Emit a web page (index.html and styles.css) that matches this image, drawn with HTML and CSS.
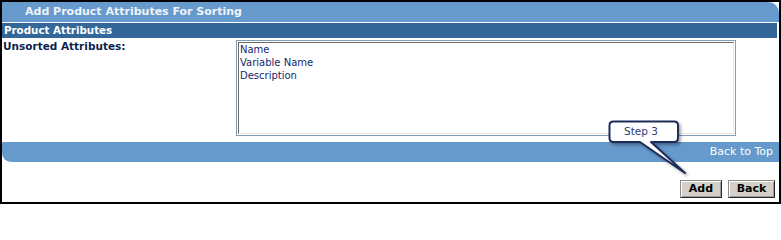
FILE: index.html
```html
<!DOCTYPE html>
<html lang="en">
<head>
<meta charset="utf-8">
<title>Add Product Attributes For Sorting</title>
<link rel="stylesheet" href="styles.css">
</head>
<body>
<div class="frame">
  <div class="title-bar">Add Product Attributes For Sorting</div>
  <div class="section-bar">Product Attributes</div>
  <div class="form-row">
    <div class="field-label">Unsorted Attributes:</div>
    <div class="listbox-wrap">
      <div class="listbox">
        <div class="option">Name</div>
        <div class="option">Variable Name</div>
        <div class="option">Description</div>
      </div>
    </div>
  </div>
  <div class="bottom-bar"><span class="top-link">Back to Top</span></div>
  <div class="actions">
    <button class="btn btn-add" type="button">Add</button>
    <button class="btn btn-back" type="button">Back</button>
  </div>
  <div class="callout">
    <svg class="callout-shape" width="781" height="204" viewBox="0 0 781 204" aria-hidden="true">
      <path d="M613.5 121.5 H674 Q678 121.5 678 125.5 V138 Q678 142 674 142 H651 L685 173 L640 142 H613.5 Q609.5 142 609.5 138 V125.5 Q609.5 121.5 613.5 121.5 Z" fill="#ffffff" stroke="#1e2c5c" stroke-width="2" stroke-linejoin="round"/>
    </svg>
    <span class="callout-text">Step 3</span>
  </div>
</div>
</body>
</html>
```
FILE: styles.css
```css
html, body {
  margin: 0;
  padding: 0;
  background: #ffffff;
}

.frame {
  position: relative;
  box-sizing: border-box;
  width: 781px;
  height: 204px;
  border: 2px solid #000000;
  background: #ffffff;
  font-family: "DejaVu Sans", Verdana, sans-serif;
  overflow: hidden;
}

.title-bar {
  height: 20px;
  line-height: 20px;
  margin-bottom: 1px;
  padding-left: 23px;
  background: #6699cc;
  border-top-right-radius: 11px;
  color: #eef3fa;
  font-size: 11px;
  font-weight: bold;
  white-space: nowrap;
}

.section-bar {
  height: 15px;
  line-height: 15px;
  margin-right: 2px;
  padding-left: 2px;
  background: #336699;
  color: #ffffff;
  font-size: 10.3px;
  font-weight: bold;
  white-space: nowrap;
}

.form-row {
  display: grid;
  grid-template-columns: 234px 500px;
  align-items: start;
}

.field-label {
  padding-top: 2px;
  padding-left: 1px;
  line-height: 13px;
  font-size: 10.5px;
  font-weight: bold;
  color: #0d1f4f;
  white-space: nowrap;
}

.listbox-wrap {
  box-sizing: border-box;
  margin-top: 2px;
  height: 96px;
  padding: 1px;
  border: 1px solid #7f9db9;
}

.listbox {
  box-sizing: border-box;
  height: 100%;
  padding: 0 1px;
  border: 1px solid;
  border-color: #6e6c60 #ebe8d8 #ebe8d8 #6e6c60;
  background: #ffffff;
}

.option {
  line-height: 13px;
  font-size: 10px;
  color: #14286e;
  white-space: nowrap;
}

.bottom-bar {
  display: flex;
  justify-content: flex-end;
  align-items: center;
  margin-top: 6px;
  height: 20px;
  padding-right: 6px;
  background: #6699cc;
  border-bottom-left-radius: 9px;
}

.top-link {
  color: #ffffff;
  font-size: 11px;
  line-height: 20px;
}

.actions {
  display: flex;
  justify-content: flex-end;
  gap: 6px;
  margin-top: 18px;
  padding-right: 4px;
}

.btn {
  box-sizing: border-box;
  height: 18px;
  padding: 0;
  border: 1px solid;
  border-color: #8a8a8a #2a2a2a #2a2a2a #8a8a8a;
  box-shadow: inset 1px 1px 0 #ffffff, inset -1px -1px 0 #9a9a9a;
  background: #d4d0c8;
  color: #000000;
  font-family: "DejaVu Sans", Verdana, sans-serif;
  font-size: 11px;
  font-weight: bold;
  line-height: 16px;
}

.btn-add {
  width: 42px;
}

.btn-back {
  width: 47px;
}

.callout {
  position: absolute;
  left: -2px;
  top: -2px;
  width: 781px;
  height: 204px;
  pointer-events: none;
}

.callout-shape {
  display: block;
  filter: drop-shadow(2px 2px 1.5px rgba(0, 0, 0, 0.35));
}

.callout-text {
  position: absolute;
  left: 624px;
  top: 124px;
  line-height: 14px;
  font-size: 10.5px;
  color: #2b3b7c;
}
```
